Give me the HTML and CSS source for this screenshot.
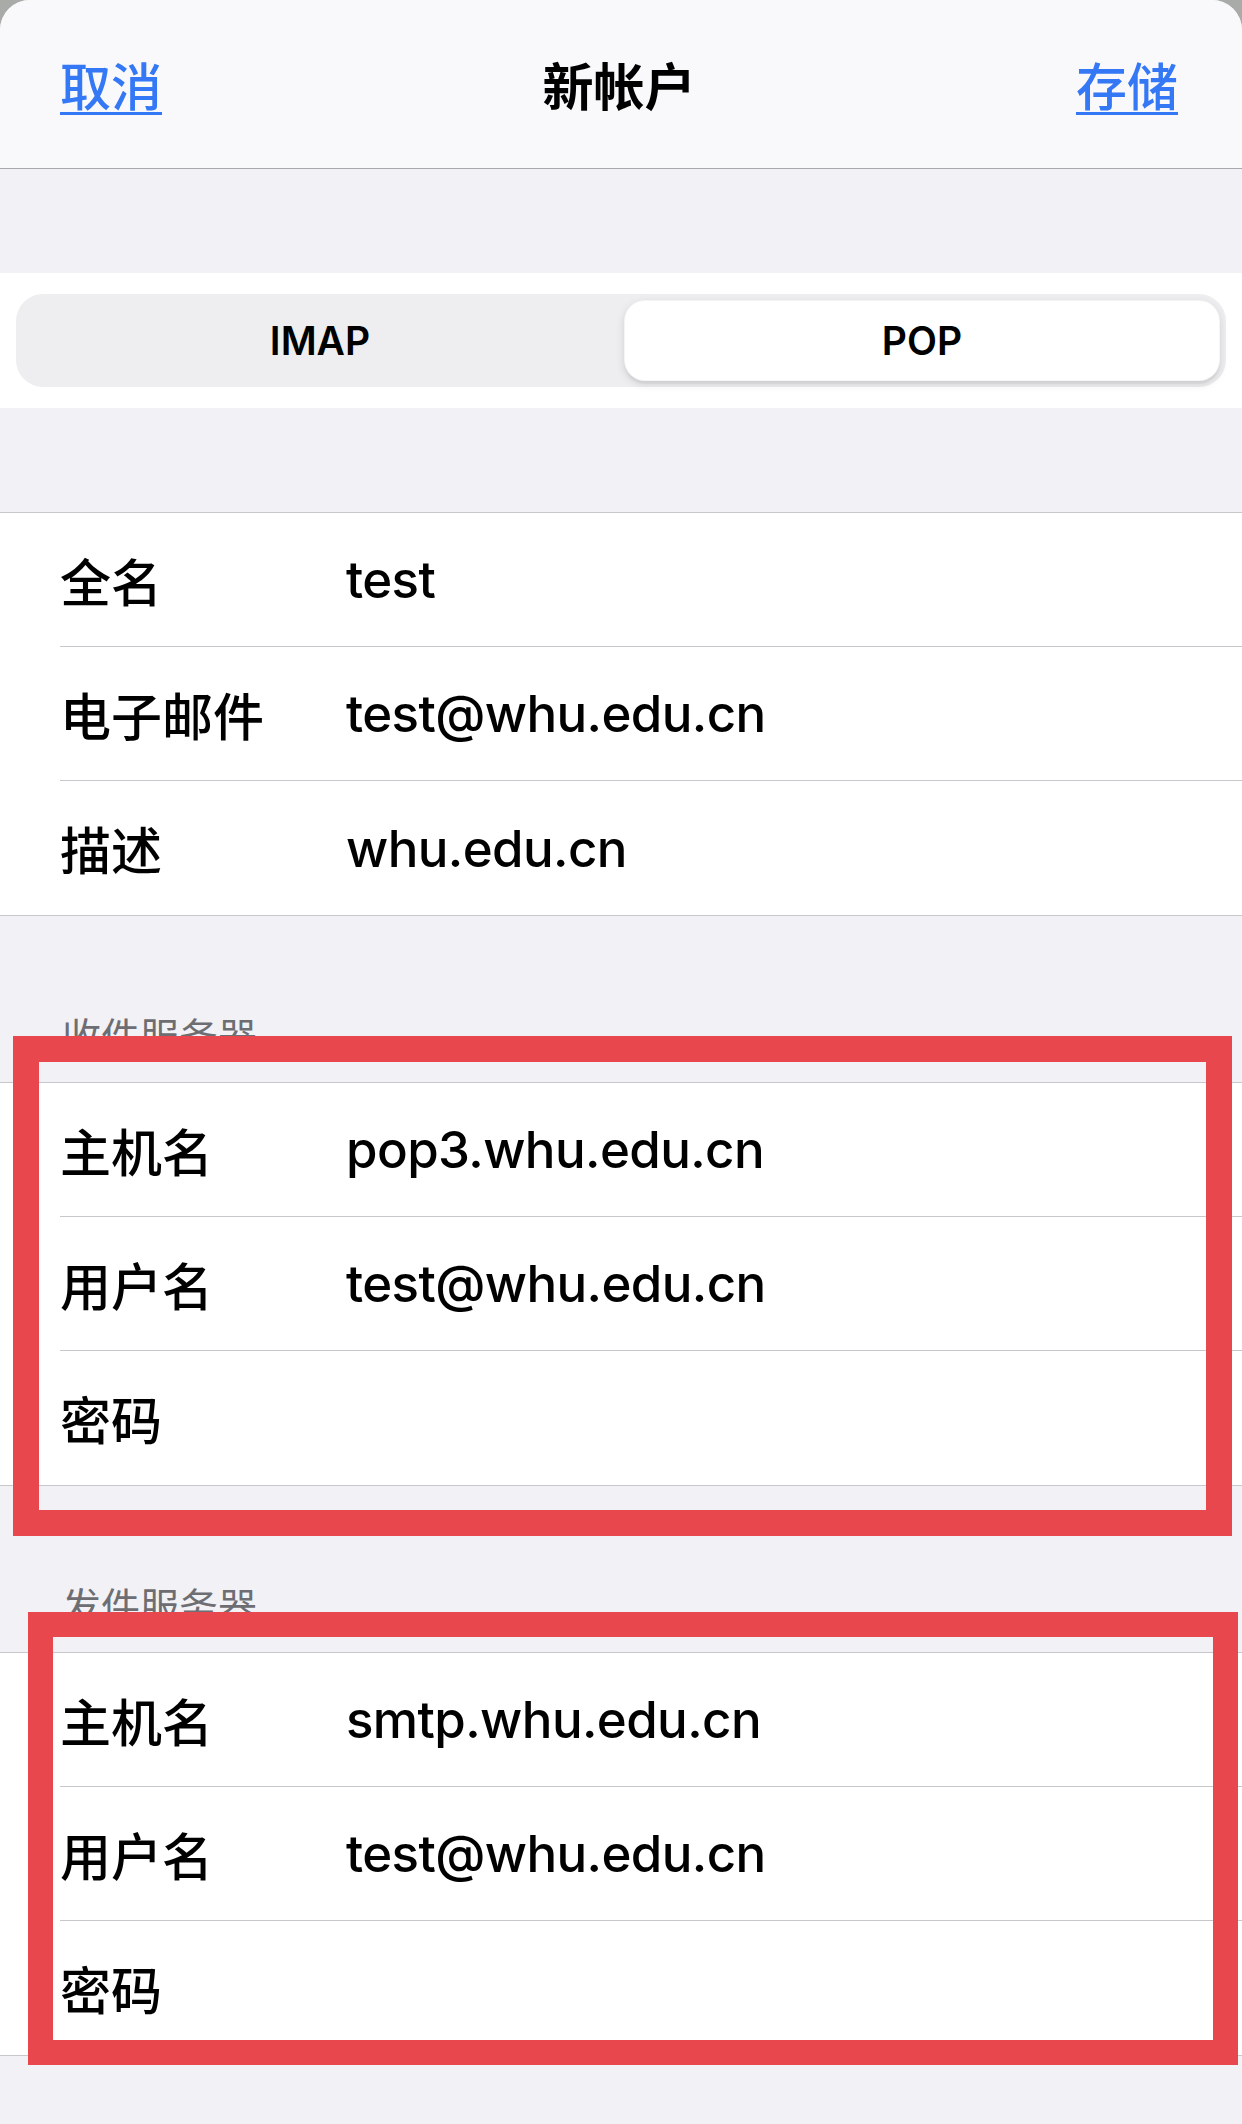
FILE: index.html
```html
<!DOCTYPE html>
<html lang="zh-CN">
<head>
    <meta charset="UTF-8">
    <meta name="viewport" content="width=device-width, initial-scale=1.0">
    <title>新帐户</title>
    <link rel="stylesheet" href="styles.css">
</head>
<body>
    <div class="sheet">
        <header class="nav">
            <a class="nav-btn" href="#">取消</a>
            <h1 class="nav-title">新帐户</h1>
            <a class="nav-btn" href="#">存储</a>
        </header>

        <div class="seg-section">
            <div class="segmented">
                <div class="seg">IMAP</div>
                <div class="seg seg-active">POP</div>
            </div>
        </div>

        <div class="group group-first">
            <div class="row"><div class="cell"><span class="label">全名</span><span class="value">test</span></div></div>
            <div class="row"><div class="cell"><span class="label">电子邮件</span><span class="value">test@whu.edu.cn</span></div></div>
            <div class="row"><div class="cell"><span class="label">描述</span><span class="value">whu.edu.cn</span></div></div>
        </div>

        <div class="section-header">收件服务器</div>
        <div class="group">
            <div class="row"><div class="cell"><span class="label">主机名</span><span class="value">pop3.whu.edu.cn</span></div></div>
            <div class="row"><div class="cell"><span class="label">用户名</span><span class="value">test@whu.edu.cn</span></div></div>
            <div class="row"><div class="cell"><span class="label">密码</span><span class="value"></span></div></div>
        </div>

        <div class="section-header">发件服务器</div>
        <div class="group">
            <div class="row"><div class="cell"><span class="label">主机名</span><span class="value">smtp.whu.edu.cn</span></div></div>
            <div class="row"><div class="cell"><span class="label">用户名</span><span class="value">test@whu.edu.cn</span></div></div>
            <div class="row"><div class="cell"><span class="label">密码</span><span class="value"></span></div></div>
        </div>

        <!-- annotation boxes drawn over the screenshot -->
        <div class="mark mark-incoming"></div>
        <div class="mark mark-outgoing"></div>
    </div>
</body>
</html>
```

FILE: styles.css
```css
html {
    background-color: #a9aba9;
}
body {
    margin: 0;
    font-family: "Inter", "Noto Sans CJK SC", sans-serif;
    color: #000;
}
.sheet {
    position: relative;
    min-height: 2124px;
    background-color: #f1f1f6;
    border-radius: 30px 30px 0 0;
    overflow: hidden;
}
.nav {
    display: flex;
    align-items: center;
    justify-content: space-between;
    height: 168px;
    padding: 0 64px 0 60px;
    background-color: #f9f9fb;
    border-bottom: 1px solid #a9a9ac;
}
.nav-btn {
    font-size: 51px;
    font-weight: 500;
    color: #3478f6;
    text-decoration: underline;
    text-underline-offset: 6px;
    text-decoration-thickness: 3px;
}
.nav-title {
    margin: 0;
    font-size: 51px;
    font-weight: 700;
}
.seg-section {
    margin-top: 104px;
    padding: 21px 16px;
    background-color: #fff;
}
.segmented {
    display: grid;
    grid-template-columns: 1fr 1fr;
    gap: 6px;
    height: 93px;
    padding: 6px;
    box-sizing: border-box;
    background-color: #eeeef0;
    border-radius: 27px;
}
.seg {
    display: flex;
    align-items: center;
    justify-content: center;
    font-size: 39px;
    font-weight: 600;
    border-radius: 21px;
}
.seg-active {
    background-color: #fff;
    border: 1px solid rgba(0, 0, 0, 0.04);
    box-shadow: 0 3px 8px rgba(0, 0, 0, 0.12), 0 3px 1px rgba(0, 0, 0, 0.04);
}
.group {
    background-color: #fff;
    border-top: 1px solid #c8c7cc;
    border-bottom: 1px solid #c8c7cc;
}
.group-first {
    margin-top: 104px;
}
.row {
    padding-left: 60px;
}
.cell {
    display: flex;
    align-items: center;
    height: 134px;
    box-sizing: border-box;
    border-bottom: 1px solid #c8c7cc;
    font-size: 51px;
    font-weight: 500;
}
.row:last-child .cell {
    border-bottom: none;
}
.label {
    width: 286px;
    flex-shrink: 0;
}
.value {
    letter-spacing: -0.6px;
}
.section-header {
    margin: 98px 0 22px;
    padding-left: 62px;
    height: 46px;
    line-height: 46px;
    font-size: 39px;
    color: #6d6d72;
}
.mark {
    position: absolute;
    border: 26px solid #e9474e;
    box-sizing: border-box;
}
.mark-incoming {
    left: 13px;
    top: 1036px;
    width: 1219px;
    height: 500px;
}
.mark-outgoing {
    left: 28px;
    top: 1612px;
    width: 1210px;
    height: 453px;
    border-width: 25px;
}
```
